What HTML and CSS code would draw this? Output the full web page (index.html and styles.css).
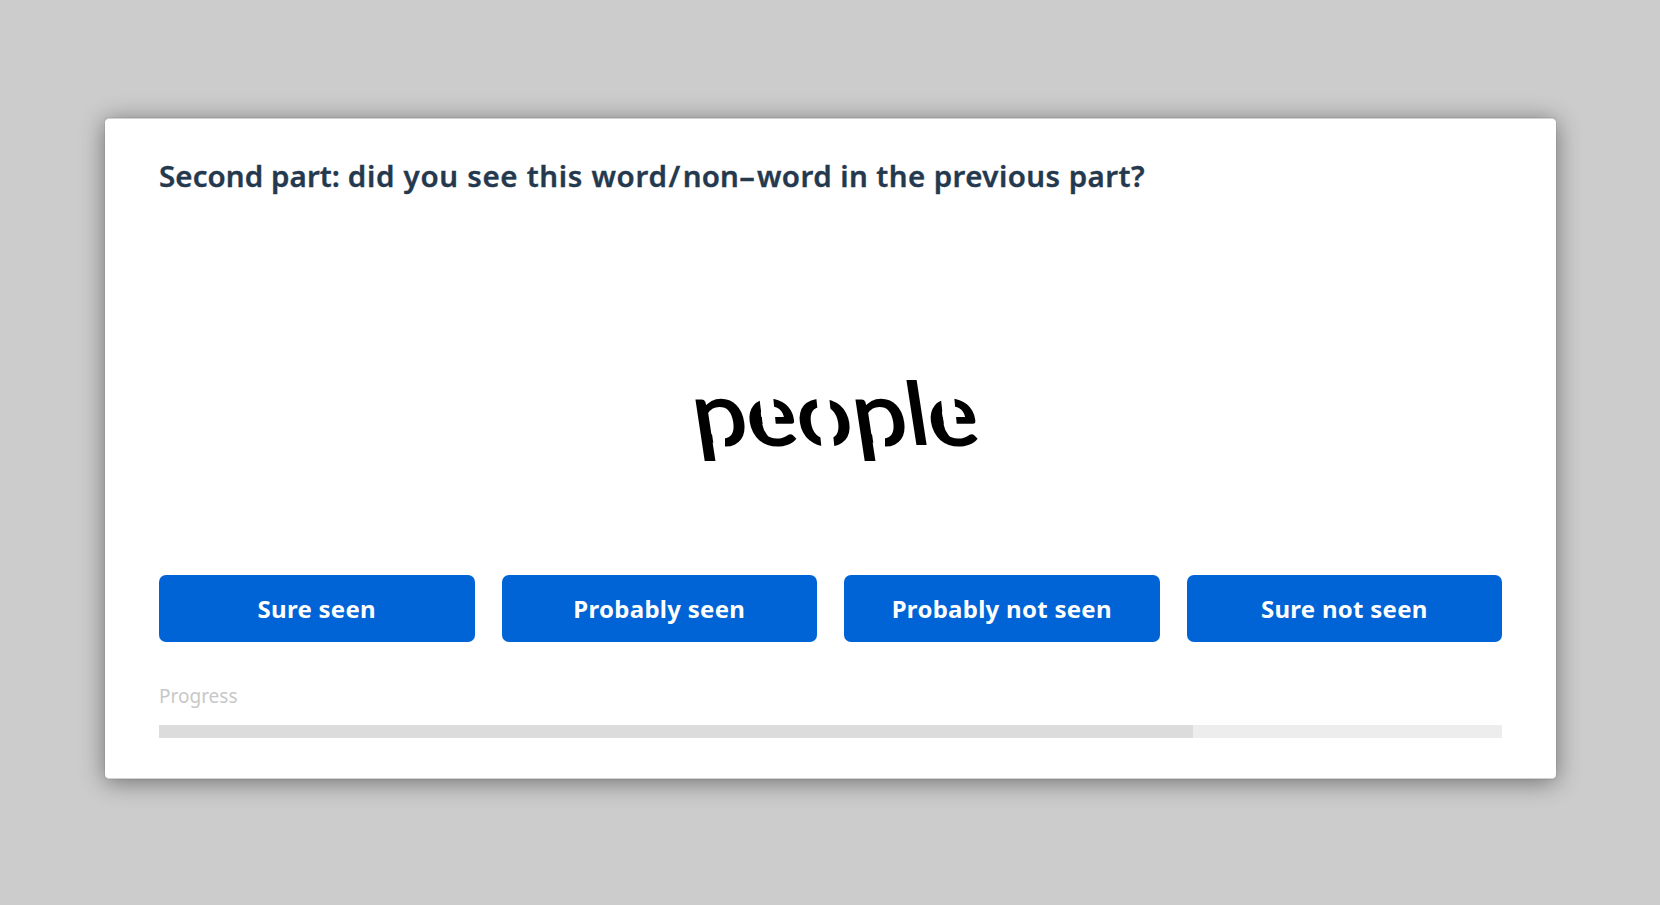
FILE: index.html
```html
<!DOCTYPE html>
<html lang="en">
<head>
<meta charset="utf-8">
<title>Word recognition</title>
<link rel="stylesheet" href="styles.css">
</head>
<body>
<main class="card">
  <h1 class="title"><span class="tight">Second part: </span><span class="loose">did you see this word</span><span class="slash">/</span><span class="tight">non</span><span class="hyphen">-</span>word in the previous part?</h1>
  <div class="stimulus">
    <svg class="word" width="310" height="110" viewBox="680 365 310 110">
      <g class="word-text">
        <text transform="matrix(1.1 0 .1505 1 696.5 444.5)">p</text>
        <text transform="matrix(1.08 0 .1505 1 750.3 444.5)">e</text>
        <text transform="matrix(1.11 0 .1505 1 800.3 444.5)">o</text>
        <text transform="matrix(1.1 0 .1505 1 856.5 444.5)">p</text>
        <text transform="matrix(1.05 0 .1505 .975 910.5 443.5)">l</text>
        <text transform="matrix(1.08 0 .1505 1 931.6 444.5)">e</text>
      </g>
      <!-- stencil gaps -->
      <g class="gaps">
        <path d="M711 427L720 432L725 434V450H714.300Z"/>
        <path d="M759 395H773L776 427H763Z"/>
        <path d="M816 395H829L834.500 448H821.500Z"/>
        <path d="M871 427L880 432L885 434V450H874.300Z"/>
        <path d="M940.500 395H954L957 427H944Z"/>
      </g>
      <g class="joins">
        <path id="join" d="M759 401.500L756 406L755 420L758 432L769 438L764 430L762.500 425Z"/>
        <use href="#join" x="181.300"/>
      </g>
    </svg>
  </div>
  <div class="answers">
    <button class="answer">Sure seen</button>
    <button class="answer">Probably seen</button>
    <button class="answer">Probably not seen</button>
    <button class="answer">Sure not seen</button>
  </div>
  <div class="label">Progress</div>
  <div class="track"><div class="fill"></div></div>
</main>
</body>
</html>
```
FILE: styles.css
```css
* { box-sizing: border-box; }
body {
  margin: 0;
  height: 905px;
  padding: 118px 104px 126px 105px;
  display: flex;
  background: #ccc;
  font-family: "Noto Sans", "Open Sans", sans-serif;
}
.card {
  flex: 1;
  display: flex;
  flex-direction: column;
  padding: 37px 54px 40px;
  background: #fff;
  border-top: 1px solid #d2d2d2;
  border-bottom: 1px solid #d2d2d2;
  border-radius: 4px;
  box-shadow: 0 0 1px rgba(0,0,0,.5), 0 3px 24px rgba(0,0,0,.45);
}
.title {
  margin: 0;
  height: 40px;
  line-height: 40px;
  white-space: nowrap;
  font-size: 29.500px;
  font-weight: 600;
  letter-spacing: .43px;
  color: #25394e;
  -webkit-text-stroke: .35px #25394e;
}
.tight { letter-spacing: .08px; }
.loose { letter-spacing: .69px; }
.slash { letter-spacing: 2.500px; margin-left: 1px; }
.hyphen {
  display: inline-block;
  width: 18px;
  letter-spacing: 0;
  transform: scaleX(1.700);
  transform-origin: 0 50%;
}
.stimulus {
  height: 380px;
  padding: 169px 0 0 521px;
}
.word { display: block; overflow: visible; }
.word-text {
  font-family: Lato, sans-serif;
  font-size: 88px;
  fill: #000;
  stroke: #000;
  stroke-width: 1.900px;
}
.gaps { fill: #fff; }
.joins { fill: #000; }
.answers {
  display: grid;
  grid-template-columns: repeat(4, 1fr);
  gap: 27px;
  height: 67px;
}
.answer {
  border: 0;
  border-radius: 7px;
  padding: 0 0 1px;
  background: #0064d6;
  color: #fff;
  font: 700 24px "Noto Sans", "Open Sans", sans-serif;
  letter-spacing: .27px;
}
.label {
  height: 30px;
  margin: 39px 0 14px;
  line-height: 30px;
  font-size: 19px;
  color: #c8c8c8;
}
.track { height: 13px; background: #ededed; }
.fill { width: 1034px; height: 13px; background: #dcdcdc; }
```
